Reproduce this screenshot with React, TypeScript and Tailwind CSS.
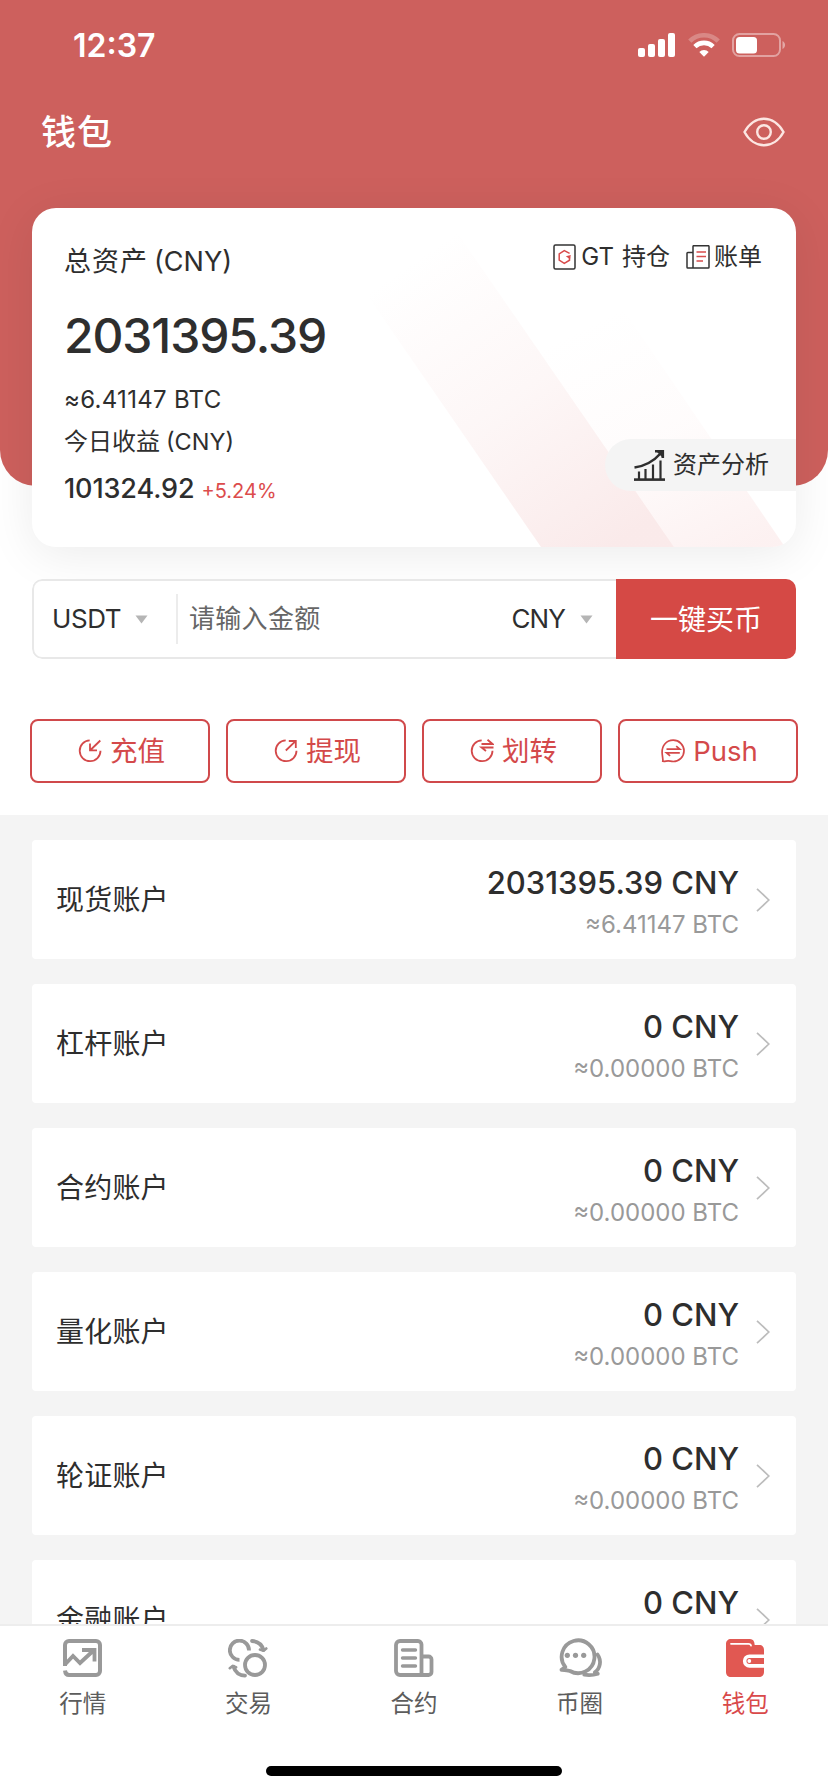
import type { ReactNode } from "react";

const accounts = [
  { name: "现货账户", amount: "2031395.39 CNY", btc: "≈6.41147 BTC" },
  { name: "杠杆账户", amount: "0 CNY", btc: "≈0.00000 BTC" },
  { name: "合约账户", amount: "0 CNY", btc: "≈0.00000 BTC" },
  { name: "量化账户", amount: "0 CNY", btc: "≈0.00000 BTC" },
  { name: "轮证账户", amount: "0 CNY", btc: "≈0.00000 BTC" },
  { name: "金融账户", amount: "0 CNY", btc: "≈0.00000 BTC" },
];

function StatusBar() {
  return (
    <div className="flex h-[90px] items-center justify-between pl-[73px] pr-[42px] text-white">
      <span className="pt-[2px] text-[32px] font-semibold leading-[40px]">12:37</span>
      <div className="flex items-center">
        <svg className="mr-[13px] h-6 w-[37px]" viewBox="0 0 37 24" fill="#fff">
          <rect x="0" y="15" width="7" height="9" rx="2" />
          <rect x="10" y="11" width="7" height="13" rx="2" />
          <rect x="20" y="6" width="7" height="18" rx="2" />
          <rect x="30" y="0" width="7" height="24" rx="2" />
        </svg>
        <svg className="mr-[12px] h-6 w-8" viewBox="0 0 32 24" fill="none" strokeWidth="4.6">
          <path d="M1.8 8.2a20 20 0 0 1 28.4 0" stroke="#fff" strokeOpacity=".25" />
          <path d="M6.9 13.6a13 13 0 0 1 18.2 0" stroke="#fff" />
          <path d="M16 23.8l-4.7-4.8a6.8 6.8 0 0 1 9.4 0z" fill="#fff" />
        </svg>
        <svg className="h-6 w-[54px]" viewBox="0 0 54 24">
          <rect x="1" y="1" width="47" height="22" rx="6.5" fill="none" stroke="#fff" strokeOpacity=".42" strokeWidth="2" />
          <rect x="4" y="4" width="21" height="16.5" rx="3.5" fill="#fff" />
          <path d="M50.5 8c3.4 1.4 3.4 6.6 0 8z" fill="#fff" fillOpacity=".45" />
        </svg>
      </div>
    </div>
  );
}

function EyeIcon() {
  return (
    <svg className="h-[30px] w-[42px]" viewBox="0 0 42 30" fill="none" stroke="#fce6e2" strokeWidth="2.4">
      <path d="M1.5 15C6 6.5 13.5 1.7 21 1.7S36 6.5 40.5 15C36 23.5 28.5 28.3 21 28.3S6 23.5 1.5 15z" />
      <circle cx="21" cy="15" r="6.8" />
    </svg>
  );
}

function HoldingIcon() {
  return (
    <svg className="h-[26px] w-[23px]" viewBox="0 0 23 26" fill="none" strokeWidth="1.5">
      <rect x="1" y="1" width="21" height="24" rx="1.5" stroke="#333" />
      <path d="M16.6 9.4L11.3 6.6 6.2 9.8v6.4l5.1 3.1 5.2-3.1v-3" stroke="#d84c4c" />
      <path d="M12.8 12.3l5-1.3-.8 4.2z" fill="#d84c4c" />
    </svg>
  );
}

function BillIcon() {
  return (
    <svg className="h-[24px] w-[24px]" viewBox="0 0 24 24" fill="none" strokeWidth="1.5">
      <path d="M7 23V1.500a.8.8 0 0 1 .8-.8h14.400a.8.8 0 0 1 .8.8v20.700a.8.8 0 0 1-.8.8H1.800a.8.8 0 0 1-.8-.8V8.200a.8.8 0 0 1 .8-.8H7" stroke="#333" />
      <path d="M10.500 7h9.500M10.500 11.500h9.500M10.500 16h6.500" stroke="#d84c4c" />
    </svg>
  );
}

function AnalysisIcon() {
  return (
    <svg className="h-[31px] w-[31px]" viewBox="0 0 31 31" fill="none" stroke="#2e2e2e" strokeWidth="2">
      <path d="M0 29.600h31" strokeWidth="2.6" />
      <path d="M5 29v-7.500M11.500 29V19M19 29V14.500M26.500 29V10.500" strokeWidth="2.2" />
      <path d="M.5 17.500C11 16 19 12 26.500 3.500" strokeWidth="2.6" />
      <path d="M21 1.200h7.800V8" strokeWidth="2.6" />
      <path d="M23 2h5.500v5.500z" fill="#2e2e2e" stroke="none" />
    </svg>
  );
}

const openRing = "M11.7 1.4A10.4 10.4 0 1 0 22.5 11.8";

function DepositIcon() {
  return (
    <svg className="h-6 w-6" viewBox="0 0 24 24" fill="none" stroke="#d4494a" strokeWidth="1.8">
      <path d={openRing} />
      <path d="M22.3 1.5L12.5 11M12 4.5v6.8h7" />
    </svg>
  );
}

function WithdrawIcon() {
  return (
    <svg className="h-6 w-6" viewBox="0 0 24 24" fill="none" stroke="#d4494a" strokeWidth="1.8">
      <path d={openRing} />
      <path d="M11.8 11.5L21.3 2.3M14.8 2h7v7" />
    </svg>
  );
}

function TransferIcon() {
  return (
    <svg className="h-6 w-6" viewBox="0 0 24 24" fill="none" stroke="#d4494a" strokeWidth="1.8">
      <path d={openRing} />
      <path d="M11.500 5h11l-5-4.200M23.500 8.500h-12l4.500 3.500" />
    </svg>
  );
}

function PushIcon() {
  return (
    <svg className="h-6 w-6" viewBox="0 0 24 24" fill="none" stroke="#d4494a" strokeWidth="1.7">
      <path d="M1.800 22.300C2.200 20 1.300 17.500 1.100 13.500 .8 6.500 5.500 1.200 12.200 1.200c6 0 10.800 4.700 10.800 10.600s-4.800 10.700-10.800 10.700c-2 0-3.500-.6-5-.6-2 0-3.500.9-5.400.400z" />
      <path d="M5.500 10.200h13.300L15.200 7.200M18.800 13.800H5.500l3.600 3" />
    </svg>
  );
}

function MarketIcon() {
  return (
    <svg className="h-[39px] w-[39px]" viewBox="0 0 39 39" fill="none" stroke="#999" strokeWidth="4">
      <path d="M2 27V6a4 4 0 0 1 4-4h27a4 4 0 0 1 4 4v26a4 4 0 0 1-4 4H6c-2.500 0-3.700-1.500-4-4.500" />
      <path d="M2 25.500l8-8.500 7 7L30.500 11.500M19 11h12.500v11.500" strokeWidth="3.8" />
    </svg>
  );
}

function TradeIcon() {
  return (
    <svg className="h-[39px] w-[40px]" viewBox="0 0 40 39" fill="none" stroke="#999" strokeWidth="3.8">
      <path d="M11.500 20.800A9.600 9.600 0 1 1 21 11.500" />
      <circle cx="27" cy="26" r="10" />
      <path d="M24 2c6 .5 10 4 11.500 9M17 36.700c-6-.5-10-4-11.500-9" strokeLinecap="round" />
      <path d="M32 10.500l3.500 1.300 2.800-2.300M8.100 28.200l-3.500-1.300-2.800 2.300" strokeWidth="2.6" strokeLinecap="round" strokeLinejoin="round" />
    </svg>
  );
}

function ContractIcon() {
  return (
    <svg className="h-[39px] w-[40px]" viewBox="0 0 40 39" fill="none" stroke="#999" strokeWidth="3.8">
      <path d="M27.500 36V5.500a3.500 3.500 0 0 0-3.500-3.500H6A4 4 0 0 0 2 6v26a4 4 0 0 0 4 4h28.500a3 3 0 0 0 3-3V20.500a3 3 0 0 0-3-3h-7" />
      <path d="M8.500 11h13M8.500 19h13M8.500 27h13" strokeWidth="3.4" strokeLinecap="round" />
    </svg>
  );
}

function CommunityIcon() {
  return (
    <svg className="h-[42px] w-[46px]" viewBox="0 0 46 42" fill="none" stroke="#999" strokeWidth="3.8" strokeLinecap="round" strokeLinejoin="round">
      <path d="M4.500 32.800l3.800-2.800A16.400 16.400 0 1 1 13 34c-2.500-.9-5-1-8.500-1.200z" />
      <path d="M40.500 17.500c4.300 6 2.800 14-2.700 17.800l3 1.400c-4 1.300-8.500 1.700-13.500 1" />
      <g fill="#999" stroke="none">
        <circle cx="10.300" cy="18.300" r="2.6" />
        <circle cx="18.500" cy="18.300" r="2.6" />
        <circle cx="26.700" cy="18.300" r="2.6" />
      </g>
    </svg>
  );
}

function WalletIcon() {
  return (
    <svg className="h-[39px] w-[39px]" viewBox="0 0 39 39">
      <path d="M5 0h19c3 0 4.500 2 4.700 6H33c3.500 0 5 2 5 5v22c0 3-2 5-5 5H5c-3 0-5-2-5-5V5c0-3 2-5 5-5z" fill="#e15852" />
      <path d="M5 4.800h17.500c1.500 0 2.300.5 2.500 1.800" fill="none" stroke="#fff" strokeWidth="1.8" strokeLinecap="round" />
      <path d="M38.500 17.200H23.500a4.800 4.800 0 0 0 0 9.700h15" fill="none" stroke="#fff" strokeWidth="3.6" />
      <circle cx="23.300" cy="22" r="1.9" fill="#fff" />
    </svg>
  );
}

function Caret() {
  return (
    <svg className="h-[9px] w-[13px]" viewBox="0 0 13 9">
      <path d="M.5.5h12L6.500 8.500z" fill="#b5b5b5" />
    </svg>
  );
}

function CardStripes() {
  return (
    <svg className="absolute inset-0 h-full w-full" viewBox="0 0 764 339">
      <defs>
        <linearGradient id="wide" gradientUnits="userSpaceOnUse" x1="365" y1="65" x2="560" y2="350">
          <stop offset="0" stopColor="#f6d9d9" stopOpacity="0" />
          <stop offset=".5" stopColor="#f6d9d9" stopOpacity=".22" />
          <stop offset="1" stopColor="#f6d9d9" stopOpacity=".55" />
        </linearGradient>
        <linearGradient id="narrow" gradientUnits="userSpaceOnUse" x1="570" y1="110" x2="690" y2="350">
          <stop offset="0" stopColor="#f9dede" stopOpacity="0" />
          <stop offset=".5" stopColor="#f9dede" stopOpacity=".1" />
          <stop offset="1" stopColor="#f9dede" stopOpacity=".42" />
        </linearGradient>
      </defs>
      <path d="M509 339h133L422 20H289z" fill="url(#wide)" />
      <path d="M642 339h111L563 60H450z" fill="url(#narrow)" />
    </svg>
  );
}

function BalanceCard() {
  return (
    <section className="relative mx-8 -mt-[278px] flex h-[339px] flex-col overflow-hidden rounded-[24px] bg-white shadow-[0_8px_48px_rgba(0,0,0,0.08)]">
      <CardStripes />
      <div className="relative flex items-start justify-between pl-[32px] pr-[34px] pt-[31px]">
        <div className="flex items-center pt-[2px] text-[27px] leading-[42px]">
          <span className="tracking-[1px]">总资产</span>
          <span className="ml-[6px]">(CNY)</span>
        </div>
        <div className="flex h-[36px] items-center text-[24px] leading-[36px]">
          <HoldingIcon />
          <span className="ml-[5px]">GT</span>
          <span className="ml-[8px]">持仓</span>
          <span className="ml-[16px] flex items-center">
            <BillIcon />
            <span className="ml-1">账单</span>
          </span>
        </div>
      </div>
      <div className="relative flex flex-col items-start pl-[32px]">
        <p className="mt-[23px] text-[48px] font-medium leading-[60px] tracking-[-1.1px]">2031395.39</p>
        <p className="mt-[16px] text-[24px] leading-[36px] tracking-[0.3px]">≈6.41147 BTC</p>
        <p className="mt-[5px] flex text-[24px] leading-[38px]">
          <span>今日收益</span>
          <span className="ml-[6px] text-[23.5px]">(CNY)</span>
        </p>
        <p className="mt-[8px] flex items-baseline leading-[40px]">
          <span className="text-[27px] font-medium tracking-[-0.1px]">101324.92</span>
          <span className="ml-[7px] text-[20px] text-[#dc4c4c]">+5.24%</span>
        </p>
      </div>
      <button className="absolute right-0 top-[231px] flex h-[52px] w-[191px] items-center rounded-l-full bg-[#f4f4f4] pl-[29px] text-[24px] leading-[52px]">
        <AnalysisIcon />
        <span className="ml-2">资产分析</span>
      </button>
    </section>
  );
}

function QuickBuy() {
  return (
    <section className="relative mx-8 mt-8 flex h-[80px] overflow-hidden rounded-[10px]">
      <div className="flex flex-1 items-center rounded-l-[10px] border-2 border-r-0 border-[#e8e8e8] bg-white pl-[18px] pr-[23px] text-[26px] leading-[40px]">
        <span className="w-[67px] tracking-[-0.4px]">USDT</span>
        <span className="ml-[16px] flex"><Caret /></span>
        <span className="ml-[28px] h-[50px] w-[2px] bg-[#ececec]" />
        <span className="ml-[11px] flex-1 tracking-[0.3px] text-[#666]">请输入金额</span>
        <span className="tracking-[-0.9px]">CNY</span>
        <span className="ml-[15px] flex"><Caret /></span>
      </div>
      <button className="h-full w-[180px] bg-[#d54945] text-[28px] leading-[82px] text-white">一键买币</button>
    </section>
  );
}

function ActionButton({ icon, label }: { icon: ReactNode; label: string }) {
  return (
    <button className="flex h-16 flex-1 items-center justify-center gap-[8px] rounded-[8px] border-2 border-[#d0494b] bg-white pl-[3px] text-[27.5px] leading-[60px] text-[#d4494a]">
      {icon}
      <span>{label}</span>
    </button>
  );
}

function AccountRow({ name, amount, btc }: { name: string; amount: string; btc: string }) {
  return (
    <li className="flex h-[119px] shrink-0 items-center rounded-[4px] bg-white pl-[24px] pr-[26px]">
      <span className="flex-1 text-[28px] leading-[40px] tracking-[0.2px]">{name}</span>
      <div className="flex flex-col items-end pt-[7px]">
        <span className="text-[31px] font-medium leading-[42px]">{amount}</span>
        <span className="text-[24px] leading-[41px] text-[#999]">{btc}</span>
      </div>
      <svg className="ml-[17px] h-6 w-[14px]" viewBox="0 0 14 24" fill="none" stroke="#bcbcbc" strokeWidth="1.7">
        <path d="M1 .8L12.8 12 1 23.2" />
      </svg>
    </li>
  );
}

function Tab({ icon, label, active }: { icon: ReactNode; label: string; active?: boolean }) {
  return (
    <a className="flex flex-1 flex-col items-center">
      <span className="flex h-[42px] items-center justify-center">{icon}</span>
      <span className={active ? "mt-[8px] text-[23.5px] leading-[34px] text-[#d9494a]" : "mt-[8px] text-[23.5px] leading-[34px] text-[#5c5c5c]"}>{label}</span>
    </a>
  );
}

export default function App() {
  return (
    <main className="flex h-[1792px] w-[828px] flex-col overflow-hidden whitespace-nowrap bg-white font-['Inter','Noto_Sans_CJK_SC',sans-serif] font-[380] text-[#2e2e2e]">
      <header className="h-[486px] shrink-0 rounded-b-[36px] bg-[#cd605d]">
        <StatusBar />
        <div className="flex h-[84px] items-center justify-between pl-[41px] pr-[43px]">
          <h1 className="text-[35px] font-medium leading-[50px] tracking-[1px] text-white">钱包</h1>
          <EyeIcon />
        </div>
      </header>
      <div className="shrink-0">
        <BalanceCard />
        <QuickBuy />
        <div className="mx-[30px] mb-8 mt-[60px] flex gap-4">
          <ActionButton icon={<DepositIcon />} label="充值" />
          <ActionButton icon={<WithdrawIcon />} label="提现" />
          <ActionButton icon={<TransferIcon />} label="划转" />
          <ActionButton icon={<PushIcon />} label="Push" />
        </div>
      </div>
      <ul className="flex h-[809px] shrink-0 flex-col gap-[25px] overflow-hidden bg-[#f4f4f4] px-8 pt-[25px]">
        {accounts.map((a) => (
          <AccountRow key={a.name} {...a} />
        ))}
      </ul>
      <nav className="flex h-[142px] shrink-0 border-t-2 border-[#ededed] bg-white pt-[11px]">
        <Tab icon={<MarketIcon />} label="行情" />
        <Tab icon={<TradeIcon />} label="交易" />
        <Tab icon={<ContractIcon />} label="合约" />
        <Tab icon={<CommunityIcon />} label="币圈" />
        <Tab icon={<WalletIcon />} label="钱包" active />
      </nav>
      <div className="mx-auto h-[10px] w-[296px] shrink-0 rounded-full bg-black" />
    </main>
  );
}
